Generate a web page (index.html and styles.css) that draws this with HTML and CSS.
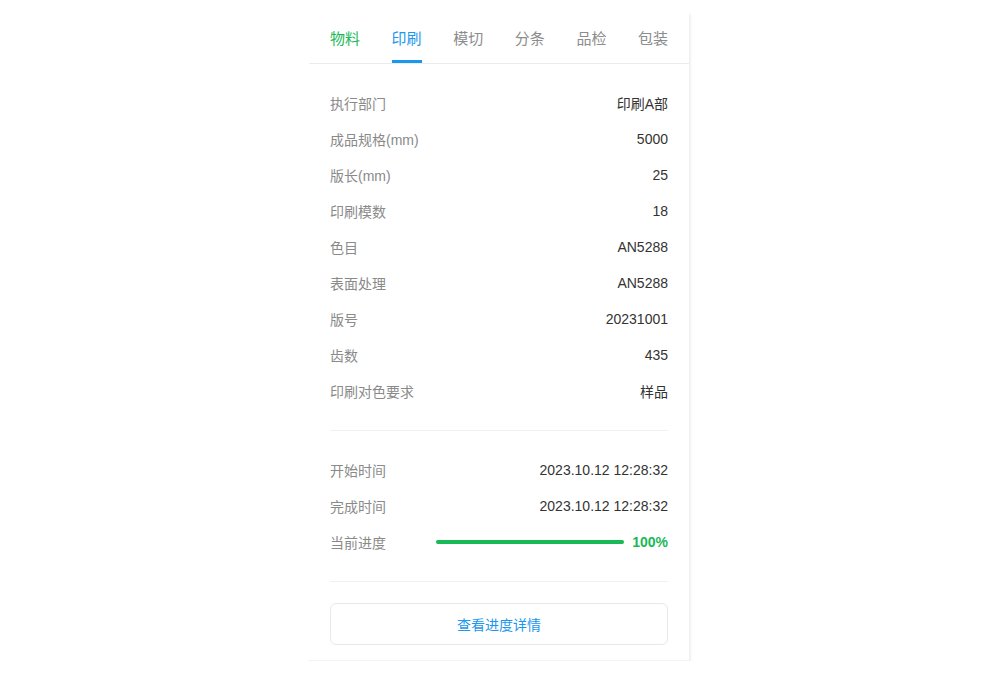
FILE: index.html
```html
<!DOCTYPE html>
<html lang="zh-CN">
<head>
  <meta charset="UTF-8" />
  <meta name="viewport" content="width=device-width, initial-scale=1.0" />
  <title>印刷进度</title>
  <link rel="stylesheet" href="styles.css">
</head>
<body>
  <div class="card">
    <nav class="tabs">
      <a class="tab done">物料</a>
      <a class="tab active">印刷</a>
      <a class="tab">模切</a>
      <a class="tab">分条</a>
      <a class="tab">品检</a>
      <a class="tab">包装</a>
    </nav>

    <div class="content">
      <div class="group">
        <div class="row"><span class="label">执行部门</span><span class="value">印刷A部</span></div>
        <div class="row"><span class="label">成品规格(mm)</span><span class="value">5000</span></div>
        <div class="row"><span class="label">版长(mm)</span><span class="value">25</span></div>
        <div class="row"><span class="label">印刷模数</span><span class="value">18</span></div>
        <div class="row"><span class="label">色目</span><span class="value">AN5288</span></div>
        <div class="row"><span class="label">表面处理</span><span class="value">AN5288</span></div>
        <div class="row"><span class="label">版号</span><span class="value">20231001</span></div>
        <div class="row"><span class="label">齿数</span><span class="value">435</span></div>
        <div class="row"><span class="label">印刷对色要求</span><span class="value">样品</span></div>
      </div>

      <div class="group">
        <div class="row"><span class="label">开始时间</span><span class="value">2023.10.12 12:28:32</span></div>
        <div class="row"><span class="label">完成时间</span><span class="value">2023.10.12 12:28:32</span></div>
        <div class="row progress-row">
          <span class="label">当前进度</span>
          <div class="bar"><div class="bar-fill" style="width: 100%"></div></div>
          <span class="percent">100%</span>
        </div>
      </div>

      <button class="detail-btn">查看进度详情</button>
    </div>
  </div>
</body>
</html>
```

FILE: styles.css
```css
body {
  margin: 0;
  padding: 0;
  background: #fff;
  font-family: 'Liberation Sans', 'Noto Sans CJK SC', sans-serif;
  color: #333;
}
.card {
  width: 381px;
  margin: 14px 0 0 309px;
  background: #fff;
  box-shadow: 1px 1px 2px rgba(0,0,0,0.06);
  border-right: 1px solid #f0f0f0;
  border-bottom: 1px solid #f3f3f3;
  box-sizing: border-box;
}
.tabs {
  display: flex;
  justify-content: space-between;
  padding: 0 21px 0 21px;
  height: 49px;
  border-bottom: 1px solid #ececec;
}
.tab {
  position: relative;
  padding-top: 1px;
  font-size: 15px;
  line-height: 48px;
  color: #8c8c8c;
  cursor: pointer;
}
.tab.done {
  color: #19b955;
}
.tab.active {
  color: #1a97ee;
}
.tab.active::after {
  content: "";
  position: absolute;
  left: 0;
  right: 0;
  bottom: 0;
  height: 3px;
  background: #1a97ee;
}
.content {
  padding: 0 21px 15px 21px;
}
.group {
  padding: 21px 0;
  border-bottom: 1px solid #f0f0f0;
}
.row {
  display: flex;
  justify-content: space-between;
  align-items: center;
  height: 36px;
  font-size: 14px;
}
.label {
  color: #8a8a8a;
}
.value {
  color: #333;
}
.progress-row .label {
  width: 106px;
  flex: none;
}
.bar {
  flex: 1;
  height: 4px;
  border-radius: 2px;
  background: #eee;
  margin-right: 8px;
}
.bar-fill {
  height: 100%;
  border-radius: 2px;
  background: #19b955;
}
.percent {
  color: #19b955;
  font-weight: bold;
  font-size: 14px;
}
.detail-btn {
  display: block;
  width: 100%;
  height: 42px;
  margin-top: 21px;
  background: #fff;
  border: 1px solid #e8e8e8;
  border-radius: 6px;
  color: #1a97ee;
  font-family: inherit;
  font-size: 14px;
  cursor: pointer;
}
```
